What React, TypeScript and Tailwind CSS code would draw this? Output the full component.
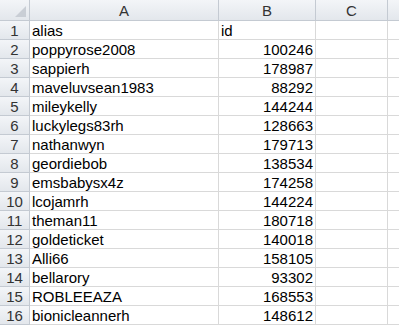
import React from "react";

const rows: [string, string][] = [
  ["alias", "id"],
  ["poppyrose2008", "100246"],
  ["sappierh", "178987"],
  ["maveluvsean1983", "88292"],
  ["mileykelly", "144244"],
  ["luckylegs83rh", "128663"],
  ["nathanwyn", "179713"],
  ["geordiebob", "138534"],
  ["emsbabysx4z", "174258"],
  ["lcojamrh", "144224"],
  ["theman11", "180718"],
  ["goldeticket", "140018"],
  ["Alli66", "158105"],
  ["bellarory", "93302"],
  ["ROBLEEAZA", "168553"],
  ["bionicleannerh", "148612"],
];

const hdr =
  "bg-gradient-to-b from-[#f3f5f8] to-[#e3e7ec] border-r border-b border-[#c4cad2] text-[#333] flex items-center justify-center";
const cell = "border-r border-b border-[#d9d9d9] flex items-center px-[2px] text-black overflow-hidden whitespace-nowrap";

export default function App() {
  return (
    <div
      className="w-[399px] h-[326px] overflow-hidden bg-white text-[15px] leading-none"
      style={{ fontFamily: '"Liberation Sans", Arial, sans-serif' }}
    >
      <div className="grid grid-cols-[30px_189px_97px_72px_40px] grid-rows-[21px_repeat(17,19px)]">
        <div className={hdr + " relative"}>
          <div className="absolute right-[3px] bottom-[3px] w-0 h-0 border-l-[11px] border-l-transparent border-b-[11px] border-b-[#c9ced5]" />
        </div>
        <div className={hdr}>A</div>
        <div className={hdr}>B</div>
        <div className={hdr}>C</div>
        <div className={hdr}></div>
        {rows.map(([a, b], i) => (
          <React.Fragment key={i}>
            <div className={hdr}>{i + 1}</div>
            <div className={cell}>{a}</div>
            <div className={cell + (i === 0 ? "" : " justify-end")}>{b}</div>
            <div className={cell}></div>
            <div className={cell}></div>
          </React.Fragment>
        ))}
      </div>
    </div>
  );
}
